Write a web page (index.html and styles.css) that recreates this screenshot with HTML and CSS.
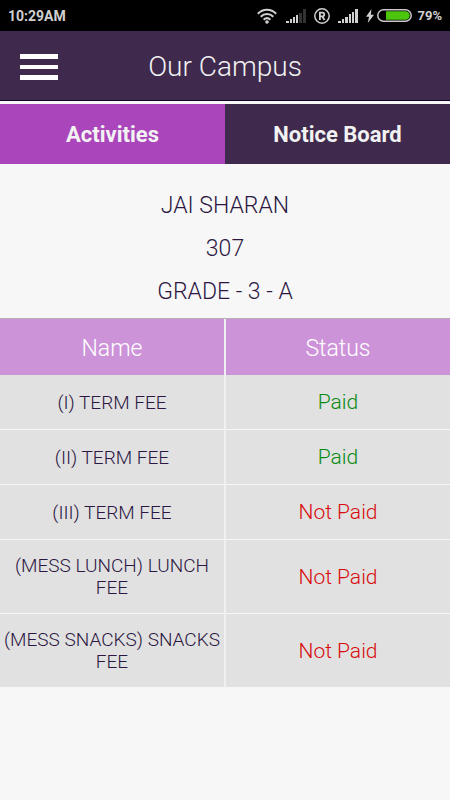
FILE: index.html
```
<!DOCTYPE html>
<html lang="en">
<head>
<meta charset="utf-8">
<meta name="viewport" content="width=device-width, initial-scale=1">
<title>Our Campus</title>
<link rel="stylesheet" href="styles.css">
</head>
<body>
<div class="status-bar">
  <span class="clock">10:29AM</span>
  <div class="indicators">
    <svg class="wifi" width="20" height="16" viewBox="0 0 20 16" fill="none" stroke="#d0d0d0" stroke-width="2">
      <path d="M.8 5.8C6 .4 14 .4 19.200 5.800M3.700 8.800c3.600-3.600 9-3.600 12.600 0M6.600 11.700c2-1.900 4.800-1.900 6.800 0"/>
      <circle cx="10" cy="14" r="1.800" fill="#d0d0d0" stroke="none"/>
    </svg>
    <svg class="signal-one" width="20" height="14" viewBox="0 0 20 14" fill="#d0d0d0">
      <path d="M0 12h3v2H0zM4 10h2v4H4zM7 8h2v6H7zM10 6h2v8h-2z"/>
      <path fill="#333" d="M13 4h3v10h-3zM17 0h3v14h-3z"/>
    </svg>
    <svg class="roaming" width="16" height="16" viewBox="0 0 16 16" fill="none" stroke="#d0d0d0">
      <circle cx="8" cy="8" r="7.200" stroke-width="1.500"/>
      <path stroke-width="1.800" d="M5.900 12V4.700h2.400c2.600 0 2.600 3.600 0 3.600H5.900M8.200 8.300l2.300 3.700"/>
    </svg>
    <svg class="signal-two" width="20" height="14" viewBox="0 0 20 14" fill="#d0d0d0">
      <path d="M0 12h3v2H0zM4 10h2v4H4zM7 8h3v6H7zM11 5h2v9h-2zM14 3h2v11h-2zM17 0h3v14h-3z"/>
    </svg>
    <svg class="bolt" width="8" height="14" viewBox="0 0 8 14" fill="#d0d0d0">
      <path d="M5.500 0 0 7.800h3L1.800 14 8 5.800H4.800z"/>
    </svg>
    <svg class="battery" width="35" height="13" viewBox="0 0 35 13">
      <rect x=".8" y=".8" width="33.400" height="11.400" rx="5.700" fill="none" stroke="#c8c8c8" stroke-width="1.500"/>
      <path fill="#4cc60d" d="M9 2.300h19.500a4.200 4.200 0 0 1 0 8.400H9z"/>
    </svg>
    <span class="percent">79%</span>
  </div>
</div>

<header class="app-bar">
  <button class="menu" type="button" aria-label="Menu">
    <svg width="38" height="27" viewBox="0 0 38 27" fill="#fff">
      <path d="M0 0h38v5H0zM0 11h38v4H0zM0 21h38v5H0z"/>
    </svg>
  </button>
  <h1>Our Campus</h1>
</header>

<nav class="tabs">
  <a class="tab active" href="#activities">Activities</a>
  <a class="tab" href="#notices">Notice Board</a>
</nav>

<main>
  <section class="student">
    <p>JAI SHARAN</p>
    <p>307</p>
    <p>GRADE - 3 - A</p>
  </section>
  <table class="fees">
    <thead>
      <tr><th scope="col">Name</th><th scope="col">Status</th></tr>
    </thead>
    <tbody>
      <tr><td>(I) TERM FEE</td><td class="paid">Paid</td></tr>
      <tr><td>(II) TERM FEE</td><td class="paid">Paid</td></tr>
      <tr><td>(III) TERM FEE</td><td class="unpaid">Not Paid</td></tr>
      <tr><td>(MESS LUNCH) LUNCH FEE</td><td class="unpaid">Not Paid</td></tr>
      <tr><td>(MESS SNACKS) SNACKS FEE</td><td class="unpaid">Not Paid</td></tr>
    </tbody>
  </table>
</main>
</body>
</html>
```
FILE: styles.css
```
* {
  box-sizing: border-box;
}

body {
  margin: 0;
  background: #f7f7f7;
  color: #2b1742;
  font-family: Roboto, "Liberation Sans", sans-serif;
  font-weight: 300;
}

.status-bar {
  display: flex;
  align-items: center;
  justify-content: space-between;
  height: 31px;
  padding: 0 8px;
  background: #000;
  color: #d0d0d0;
  font-size: 14px;
  font-weight: 700;
}

.indicators {
  display: flex;
  align-items: center;
}

.signal-one {
  margin-left: 9px;
}

.roaming,
.signal-two {
  margin-left: 8px;
}

.bolt {
  margin-left: 8px;
}

.battery {
  margin-left: 3px;
}

.percent {
  margin-left: 5px;
  font-size: 13px;
}

.app-bar {
  display: grid;
  grid-template-columns: 58px 1fr 58px;
  align-items: center;
  height: 70px;
  padding: 3px 20px 0;
  background: #3f2a4d;
  border-bottom: 1px solid #0e0630;
}

.menu {
  display: flex;
  padding: 0;
  border: 0;
  background: none;
}

h1 {
  margin: 0;
  color: #f2f2f2;
  font-size: 28px;
  font-weight: 300;
  line-height: 36px;
  text-align: center;
}

.tabs {
  display: flex;
  margin-top: 3px;
}

.tab {
  flex: 1;
  padding: 15px 0 13px;
  background: #3f2a4d;
  color: #f2f2f2;
  font-size: 22px;
  font-weight: 700;
  line-height: 32px;
  text-align: center;
  text-decoration: none;
}

.tab.active {
  background: #aa45bb;
}

.student {
  padding: 20px 0 5px;
  font-size: 23px;
  line-height: 43px;
  text-align: center;
}

.student p {
  margin: 0;
}

.fees {
  width: 100%;
  border-collapse: separate;
  border-spacing: 0;
  border-top: 1px solid #b0b0b0;
  table-layout: fixed;
  text-align: center;
}

.fees th {
  padding: 16px 2px 12px;
  background: #cd93d9;
  color: #fff;
  font-size: 23px;
  font-weight: 300;
  line-height: 28px;
}

.fees td {
  padding: 15px 2px 14px;
  background: #e1e1e1;
  border-bottom: 1px solid #f7f7f7;
  font-size: 19px;
  line-height: 22px;
}

.fees th:first-child,
.fees td:first-child {
  border-right: 1px solid #f0f0f0;
}

.fees th:last-child,
.fees td:last-child {
  border-left: 1px solid #f0f0f0;
}

.fees td.paid,
.fees td.unpaid {
  font-size: 21px;
  line-height: 25px;
}

.fees td.paid {
  color: #078a10;
}

.fees td.unpaid {
  color: #d80a0a;
}
```
